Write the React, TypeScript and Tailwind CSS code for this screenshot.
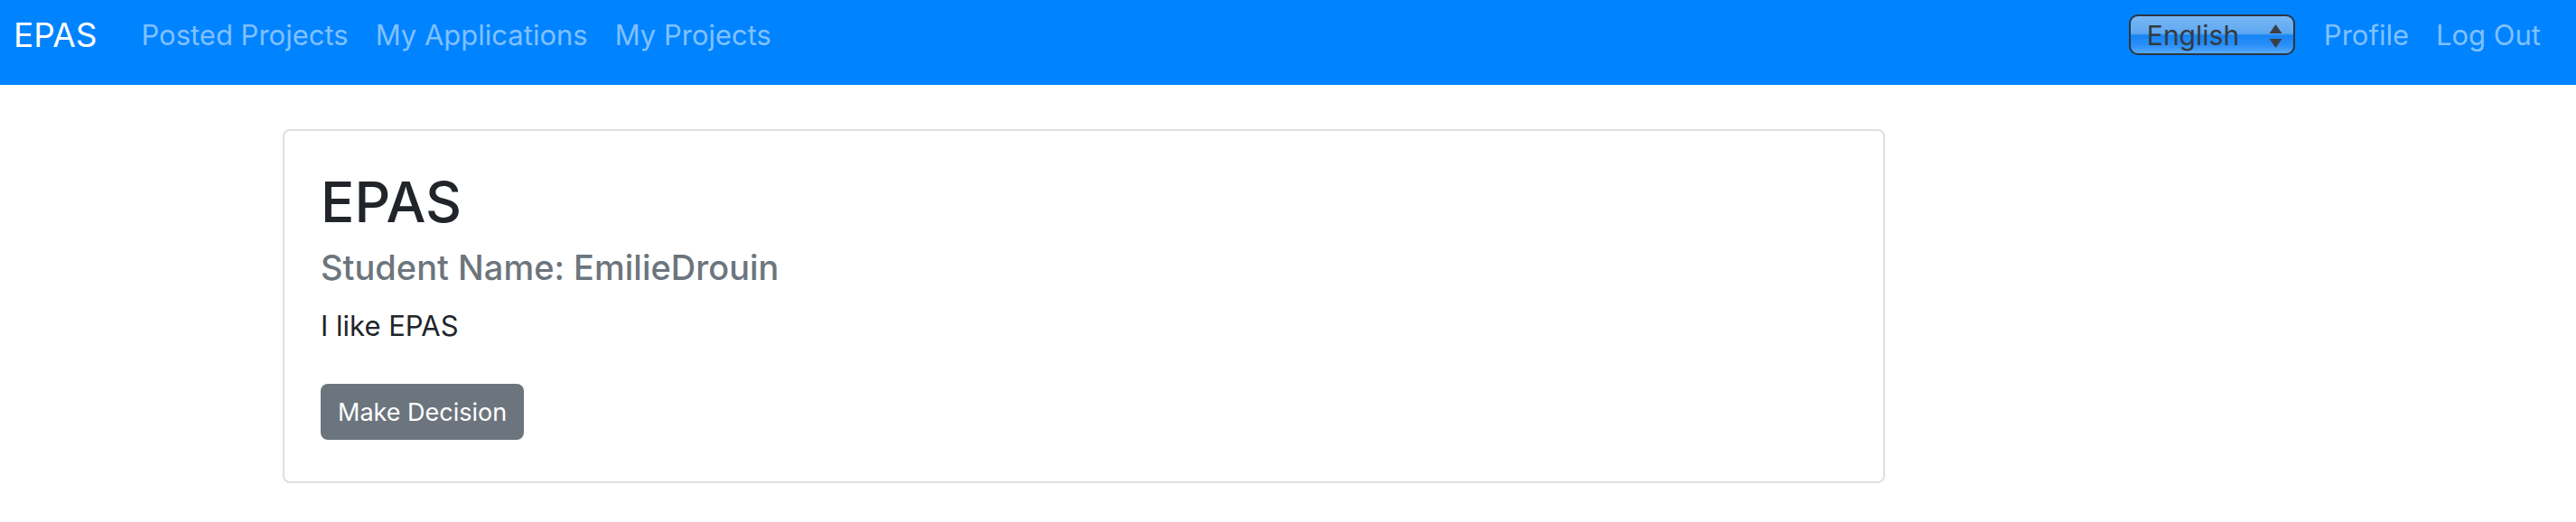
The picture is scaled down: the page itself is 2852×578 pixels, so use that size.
export default function App() {
  const font = { fontFamily: 'Inter, "Liberation Sans", sans-serif' }
  return (
    <div style={font} className="min-h-[578px] w-[2852px] bg-white">
      {/* Navbar */}
      <nav className="flex h-[94px] items-center bg-[#0083ff] pb-[17px] pl-[15px] pr-[39px]">
        <span className="mr-[49px] text-[37px] leading-none text-white">EPAS</span>
        <div className="flex items-center gap-[30px] text-[31px] leading-none text-white/50">
          <span>Posted Projects</span>
          <span>My Applications</span>
          <span>My Projects</span>
        </div>

        <div className="ml-auto flex items-center">
          {/* Language select (aqua style) */}
          <div className="relative flex h-[45px] w-[184px] items-center rounded-[10px] border-2 border-[#2b3440] bg-[linear-gradient(180deg,#78b7f4_0%,#5ea8f1_46%,#1784f5_52%,#2a8ff7_78%,#55abfb_100%)] pl-[18px]">
            <span className="text-[30px] leading-none text-[#333a42]">English</span>
            <svg className="absolute right-[12px] top-[8px]" width="15" height="28" viewBox="0 0 15 28">
              <path d="M7.5 1 L14.5 11 L0.5 11 Z" fill="#3a3f47" />
              <path d="M0.5 17 L14.5 17 L7.5 27 Z" fill="#3a3f47" />
            </svg>
          </div>
          <span className="ml-[32px] text-[31px] leading-none text-white/50">Profile</span>
          <span className="ml-[30px] text-[31px] leading-none text-white/50">Log Out</span>
        </div>
      </nav>

      {/* Card */}
      <div className="ml-[313px] mt-[49px] w-[1774px] rounded-[8px] border-2 border-[#dfdfdf] px-[40px] pb-[46px] pt-[48px]">
        <h1 className="text-[62px] font-medium leading-none text-[#212529]">EPAS</h1>
        <h5 className="mt-[22px] text-[38px] font-medium leading-none text-[#6c757d]">Student Name: EmilieDrouin</h5>
        <p className="mt-[30px] text-[31px] leading-none text-[#212529]">I like EPAS</p>
        <button className="mt-[49px] flex h-[62px] items-center rounded-[8px] bg-[#6c757d] px-[19px] text-[27px] leading-none text-white">
          Make Decision
        </button>
      </div>
    </div>
  )
}
